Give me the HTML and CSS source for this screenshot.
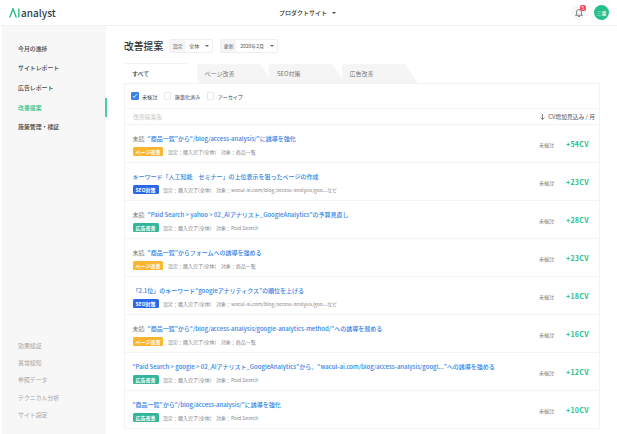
FILE: index.html
```html
<!DOCTYPE html>
<html lang="ja">
<head>
    <meta charset="UTF-8">
    <title>AI analyst</title>
    <link rel="stylesheet" href="styles.css">
</head>
<body>
    <header class="topbar">
        <div class="logo">
            <svg class="logo-mark" width="11" height="10" viewBox="0 0 11 10"><path d="M0.7 9.5 L4 0.8 L7.3 9.5" fill="none" stroke="#1fb883" stroke-width="1.3"/><path d="M9.8 0.5 V9.5" stroke="#1fb883" stroke-width="1.3"/></svg>
            <span>analyst</span>
        </div>
        <div class="site-select">プロダクトサイト<span class="caret dark"></span></div>
        <div class="top-right">
            <div class="bell">
                <svg width="8" height="9" viewBox="0 0 8 9"><path d="M1.5 6.5 V4 a2.5 2.5 0 0 1 5 0 V6.5 L7.5 7.3 H0.5 Z M3 8.5 h2" fill="none" stroke="#666" stroke-width="0.8"/></svg>
                <span class="badge">5</span>
            </div>
            <div class="avatar">三重</div>
        </div>
    </header>
    <div class="layout">
        <nav class="sidebar">
            <ul class="nav-main">
                <li>今月の進捗</li>
                <li>サイトレポート</li>
                <li>広告レポート</li>
                <li class="active">改善提案</li>
                <li>施策管理・検証</li>
            </ul>
            <ul class="nav-sub">
                <li>効果検証</li>
                <li>異常検知</li>
                <li>参照データ</li>
                <li>テクニカル分析</li>
                <li>サイト設定</li>
            </ul>
        </nav>
        <main class="content">
            <div class="title-row">
                <h1>改善提案</h1>
                <div class="picker picker-short"><span class="picker-label">設定</span><span class="picker-value">全体<span class="caret"></span></span></div>
                <div class="picker picker-long"><span class="picker-label">更新</span><span class="picker-value">2020年2月<span class="caret"></span></span></div>
            </div>
            <div class="tabs">
                <div class="tab current">すべて</div>
                <div class="tab">ページ改善</div>
                <div class="tab">SEO対策</div>
                <div class="tab">広告改善</div>
            </div>
            <div class="panel">
                <div class="filters">
                    <label class="check"><span class="box on"><svg width="7" height="6" viewBox="0 0 9 8"><path d="M1 4 L3.5 6.5 L8 1" fill="none" stroke="#fff" stroke-width="1.4"/></svg></span>未検討</label>
                    <label class="check"><span class="box"></span>施策化済み</label>
                    <label class="check"><span class="box"></span>アーカイブ</label>
                </div>
                <div class="list-head">
                    <span class="search">改善提案名</span>
                    <span class="sort"><svg width="5" height="6" viewBox="0 0 5 6"><path d="M2.5 0 V5.5 M0.5 3.5 L2.5 5.5 L4.5 3.5" fill="none" stroke="#555" stroke-width="0.7"/></svg>CV増加見込み / 月</span>
                </div>
                <div class="row">
                    <div class="row-main">
                        <div class="row-title"><span class="unread">未読</span><a>“商品一覧”から“/blog/access-analysis/”に誘導を強化</a></div>
                        <div class="row-meta"><span class="tag page">ページ改善</span><span>設定：購入完了(全体)</span><span>対象：商品一覧</span></div>
                    </div>
                    <span class="status">未検討</span><span class="cv">+54CV</span>
                </div>
                <div class="row">
                    <div class="row-main">
                        <div class="row-title"><a>キーワード「人工知能　セミナー」の上位表示を狙ったページの作成</a></div>
                        <div class="row-meta"><span class="tag seo">SEO対策</span><span>設定：購入完了(全体)</span><span>対象：wacul-ai.com/blog/access-analysis/goo...など</span></div>
                    </div>
                    <span class="status">未検討</span><span class="cv">+23CV</span>
                </div>
                <div class="row">
                    <div class="row-main">
                        <div class="row-title"><span class="unread">未読</span><a>“Paid Search &gt; yahoo &gt; 02_AIアナリスト_GoogleAnalytics”の予算見直し</a></div>
                        <div class="row-meta"><span class="tag ad">広告改善</span><span>設定：購入完了(全体)</span><span>対象：Paid Search</span></div>
                    </div>
                    <span class="status">未検討</span><span class="cv">+28CV</span>
                </div>
                <div class="row">
                    <div class="row-main">
                        <div class="row-title"><span class="unread">未読</span><a>“商品一覧”からフォームへの誘導を強める</a></div>
                        <div class="row-meta"><span class="tag page">ページ改善</span><span>設定：購入完了(全体)</span><span>対象：商品一覧</span></div>
                    </div>
                    <span class="status">未検討</span><span class="cv">+23CV</span>
                </div>
                <div class="row">
                    <div class="row-main">
                        <div class="row-title"><a>「2.1位」のキーワード“googleアナリティクス”の順位を上げる</a></div>
                        <div class="row-meta"><span class="tag seo">SEO対策</span><span>設定：購入完了(全体)</span><span>対象：wacul-ai.com/blog/access-analysis/goo...など</span></div>
                    </div>
                    <span class="status">未検討</span><span class="cv">+18CV</span>
                </div>
                <div class="row">
                    <div class="row-main">
                        <div class="row-title"><span class="unread">未読</span><a>“商品一覧”から“/blog/access-analysis/google-analytics-method/”への誘導を弱める</a></div>
                        <div class="row-meta"><span class="tag page">ページ改善</span><span>設定：購入完了(全体)</span><span>対象：商品一覧</span></div>
                    </div>
                    <span class="status">未検討</span><span class="cv">+16CV</span>
                </div>
                <div class="row">
                    <div class="row-main">
                        <div class="row-title"><a>“Paid Search &gt; google &gt; 02_AIアナリスト_GoogleAnalytics”から、“wacul-ai.com/blog/access-analysis/googl...”への誘導を強める</a></div>
                        <div class="row-meta"><span class="tag ad">広告改善</span><span>設定：購入完了(全体)</span><span>対象：Paid Search</span></div>
                    </div>
                    <span class="status">未検討</span><span class="cv">+12CV</span>
                </div>
                <div class="row">
                    <div class="row-main">
                        <div class="row-title"><a>“商品一覧”から“/blog/access-analysis/”に誘導を強化</a></div>
                        <div class="row-meta"><span class="tag ad">広告改善</span><span>設定：購入完了(全体)</span><span>対象：Paid Search</span></div>
                    </div>
                    <span class="status">未検討</span><span class="cv">+10CV</span>
                </div>
            </div>
        </main>
    </div>
</body>
</html>
```

FILE: styles.css
```css
html, body { margin: 0; height: 434px; overflow: hidden; background: #fff; }
body { font-family: "Noto Sans CJK JP", "Noto Sans", sans-serif; color: #333; }
ul { list-style: none; margin: 0; padding: 0; }

.topbar { height: 25px; display: flex; align-items: center; border-bottom: 1px solid #f0f0f0; padding: 0 8px 0 9px; }
.logo { display: flex; align-items: center; gap: 1px; font-size: 10px; font-weight: 500; color: #2d3e50; width: 270px; }
.site-select { font-size: 6px; font-weight: 500; color: #333; flex: 1; }
.top-right { display: flex; align-items: center; gap: 8px; }
.bell { width: 15px; height: 15px; border-radius: 50%; background: #f7f7f7; display: flex; align-items: center; justify-content: center; position: relative; }
.badge { position: absolute; top: 0; right: 0; width: 6px; height: 6px; border-radius: 2px; background: #f5455c; color: #fff; font-size: 5px; line-height: 6px; text-align: center; }
.avatar { width: 15px; height: 15px; border-radius: 50%; background: #25c08a; color: #fff; font-size: 5px; line-height: 15px; text-align: center; }
.caret { display: inline-block; width: 0; height: 0; border: 2px solid transparent; border-top: 2px solid #666; border-bottom: 0; margin-left: 6px; vertical-align: middle; }
.caret.dark { border-top-color: #444; margin-left: 5px; }

.layout { display: flex; height: 408px; }
.sidebar { width: 104px; margin-left: 2px; background: #f7f7f7; display: flex; flex-direction: column; justify-content: space-between; }
.nav-main { padding-top: 12.5px; }
.nav-main li { height: 19.7px; line-height: 19.7px; padding-left: 16px; font-size: 5.9px; font-weight: 500; color: #444; position: relative; }
.nav-main li.active { color: #25c08a; }
.nav-main li.active::after { content: ""; position: absolute; right: -1px; top: 0; bottom: 0; width: 2px; background: #4fcba0; }
.nav-sub { padding-bottom: 11px; }
.nav-sub li { height: 17.2px; line-height: 17.2px; padding-left: 16px; font-size: 5.9px; color: #a5a5a5; }

.content { flex: 1; padding: 12px 17px 0 18px; min-width: 0; }
.title-row { display: flex; align-items: center; height: 15px; }
h1 { margin: 0 6px 0 0; font-size: 9.8px; font-weight: 500; color: #333; }
.picker { display: flex; box-sizing: border-box; height: 14px; border: 1px solid #eee; border-radius: 2px; font-size: 5px; line-height: 12px; margin-right: 7px; }
.picker-short { width: 44px; }
.picker-long { width: 58px; }
.picker-label { width: 15px; text-align: center; background: #f5f5f5; color: #555; flex: none; }
.picker-value { padding: 0 4px; color: #555; white-space: nowrap; }

.tabs { display: flex; margin-top: 11px; height: 19px; }
.tab { width: 63px; padding-left: 8px; margin-right: 9.5px; font-size: 6px; line-height: 19px; color: #777; background: #f5f5f5; border-radius: 2px 0 0 0; position: relative; box-sizing: border-box; white-space: nowrap; }
.tab::after { content: ""; position: absolute; left: 100%; top: 0; border-style: solid; border-width: 19px 0 0 13px; border-color: transparent transparent transparent #f5f5f5; }
.tab:nth-child(1) { z-index: 4; }
.tab:nth-child(2) { z-index: 3; }
.tab:nth-child(3) { z-index: 2; }
.tab.current { background: #fff; color: #333; font-weight: 500; box-shadow: 0 -1px 0 #f2f2f2; }
.tab.current::after { border-left-color: #fff; }

.panel { border: 1px solid #f2f2f2; border-bottom: 0; overflow: hidden; }
.filters { height: 24px; display: flex; align-items: center; gap: 6.5px; padding-left: 6px; font-size: 5.1px; color: #444; }
.check { display: flex; align-items: center; gap: 3.5px; }
.box { box-sizing: border-box; width: 7.5px; height: 7.5px; border: 1px solid #e8e8e8; border-radius: 1px; display: flex; align-items: center; justify-content: center; }
.box.on { background: #3b82e6; border-color: #3b82e6; }
.list-head { height: 15px; display: flex; align-items: center; justify-content: space-between; padding: 0 4px 0 8px; border-top: 1px solid #f5f5f5; border-bottom: 1px solid #f2f2f2; font-size: 5.8px; color: #555; }
.search { color: #c4c4c4; }
.sort { display: flex; align-items: center; gap: 3px; }

.row { box-sizing: border-box; height: 38px; display: flex; align-items: center; padding: 1px 4px 0 7.5px; border-bottom: 1px solid #f4f4f4; }
.row-main { flex: 1; min-width: 0; }
.row-title { display: flex; gap: 3px; font-size: 6px; font-weight: 500; line-height: 11px; white-space: nowrap; }
.unread { color: #777; font-weight: 400; }
.row-title a { color: #2f7fe6; }
.row-meta { display: flex; align-items: center; gap: 4.5px; margin-top: 3px; font-size: 5px; line-height: 9px; color: #888; white-space: nowrap; }
.tag { height: 9px; padding: 0 3px; border-radius: 1.5px; color: #fff; font-weight: 700; }
.tag.page { background: #fbb62f; }
.tag.seo { background: #2b68e8; }
.tag.ad { background: #33b59a; }
.status { width: 27px; font-size: 5px; color: #777; }
.cv { width: 29px; font-size: 7px; font-weight: 700; letter-spacing: 0.3px; color: #25c08a; }
```
